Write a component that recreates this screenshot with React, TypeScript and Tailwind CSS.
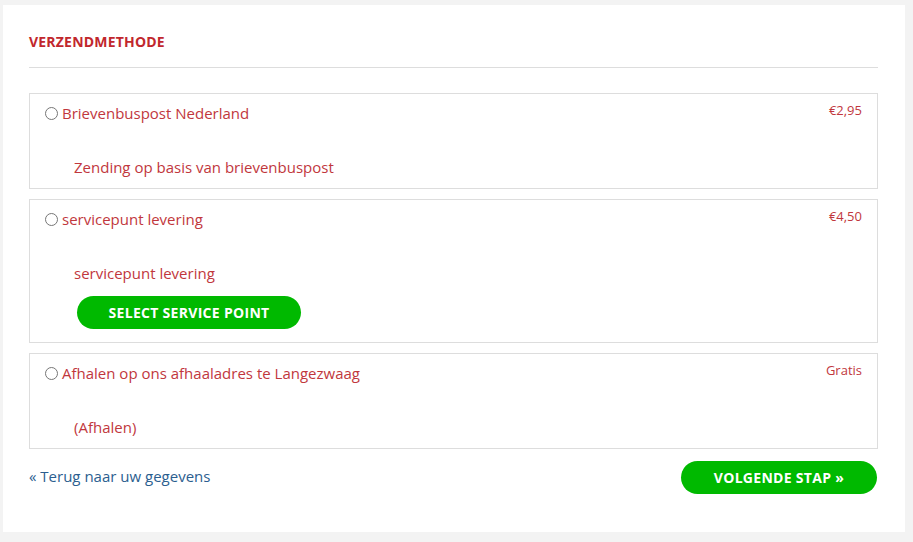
export default function App() {
  const methods = [
    { label: 'Brievenbuspost Nederland', price: '€2,95', desc: 'Zending op basis van brievenbuspost' },
    { label: 'servicepunt levering', price: '€4,50', desc: 'servicepunt levering', button: true },
    { label: 'Afhalen op ons afhaaladres te Langezwaag', price: 'Gratis', desc: '(Afhalen)' },
  ];

  return (
    <div className="min-h-[542px] bg-[#f3f3f3] pt-[5px] pl-[3px] pr-[8px] pb-[9px] font-['Open_Sans',sans-serif]">
      <div className="bg-white pl-[26px] pr-[27px] pt-[28px] pb-[38px]">
        <h2 className="text-[14px] font-bold text-[#c1272d] leading-[18px] tracking-[0.2px]">VERZENDMETHODE</h2>
        <div className="mt-[16px] border-t border-[#dddddd]" />

        <div className="mt-[25px] flex flex-col gap-[10px]">
          {methods.map((m) => (
            <div key={m.label} className="border border-[#dddddd] pl-[15px] pr-[15px] pt-[8px] pb-[10px]">
              <div className="flex items-start justify-between">
                <label className="flex items-center gap-[4px] text-[15px] leading-[22px] text-[#c1373d]">
                  <span className="inline-block w-[13px] h-[13px] rounded-full border border-[#767676] bg-white mt-[1px]" />
                  {m.label}
                </label>
                <span className="text-[13px] leading-[16px] text-[#c1373d]">{m.price}</span>
              </div>
              <div className="mt-[32px] pl-[29px] text-[15px] leading-[22px] text-[#c1373d]">{m.desc}</div>
              {m.button && (
                <button className="mt-[12px] mb-[3px] ml-[32px] h-[33px] w-[224px] rounded-full bg-[#00b900] text-white text-[14px] font-bold tracking-[0.3px]">
                  SELECT SERVICE POINT
                </button>
              )}
            </div>
          ))}
        </div>

        <div className="mt-[12px] flex items-start justify-between">
          <a className="mt-[5px] text-[15px] leading-[20px] text-[#2b5e8f]">« Terug naar uw gegevens</a>
          <button className="h-[33px] w-[196px] rounded-full bg-[#00b900] text-white text-[14px] font-bold tracking-[0.3px] mr-[1px]">
            VOLGENDE STAP »
          </button>
        </div>
      </div>
    </div>
  );
}
